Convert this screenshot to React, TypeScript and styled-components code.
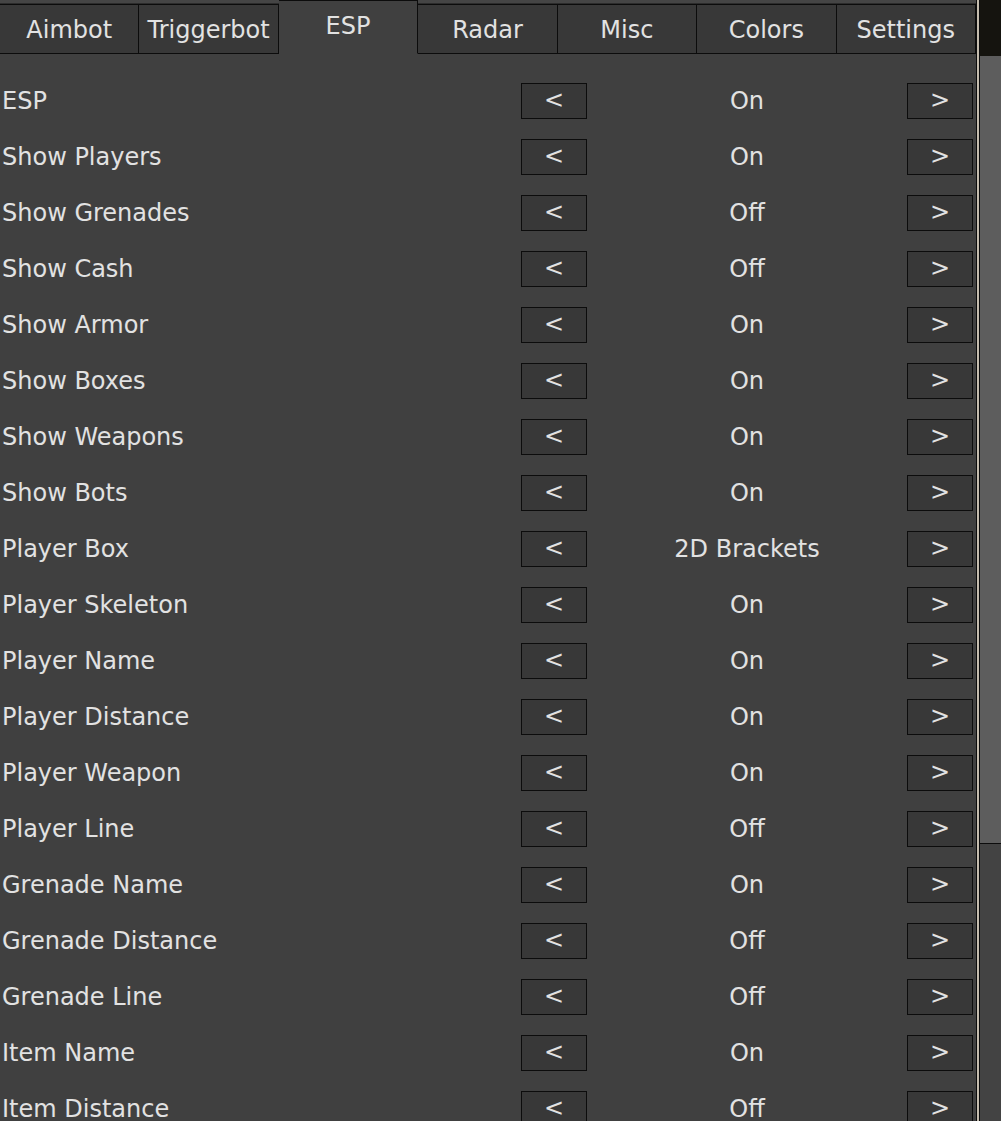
import styled, { createGlobalStyle } from 'styled-components';

const tabs = ['Aimbot', 'Triggerbot', 'ESP', 'Radar', 'Misc', 'Colors', 'Settings'];

const options: [string, string][] = [
  ['ESP', 'On'],
  ['Show Players', 'On'],
  ['Show Grenades', 'Off'],
  ['Show Cash', 'Off'],
  ['Show Armor', 'On'],
  ['Show Boxes', 'On'],
  ['Show Weapons', 'On'],
  ['Show Bots', 'On'],
  ['Player Box', '2D Brackets'],
  ['Player Skeleton', 'On'],
  ['Player Name', 'On'],
  ['Player Distance', 'On'],
  ['Player Weapon', 'On'],
  ['Player Line', 'Off'],
  ['Grenade Name', 'On'],
  ['Grenade Distance', 'Off'],
  ['Grenade Line', 'Off'],
  ['Item Name', 'On'],
  ['Item Distance', 'Off'],
];

function App() {
  const active = 'ESP';

  return (
    <>
      <GlobalStyle />
      <Page>
        <Main>
          <TabBar>
            {tabs.map(tab => (
              <Tab key={tab} $active={tab === active}>
                {tab}
              </Tab>
            ))}
          </TabBar>
          <Content>
            {options.map(([label, value]) => (
              <Row key={label}>
                <Label>{label}</Label>
                <StepButton>&lt;</StepButton>
                <Value>{value}</Value>
                <StepButton>&gt;</StepButton>
              </Row>
            ))}
          </Content>
        </Main>
        <Divider />
        <Scrollbar>
          <ScrollTop />
          <Thumb />
          <Track />
        </Scrollbar>
      </Page>
    </>
  );
}

export default App;

const GlobalStyle = createGlobalStyle`
  html, body {
    margin: 0;
    padding: 0;
    background: #404040;
  }
  * {
    box-sizing: border-box;
  }
`;

const Page = styled.div`
  display: flex;
  width: 1001px;
  height: 1121px;
  overflow: hidden;
  font-family: 'DejaVu Sans', Verdana, sans-serif;
  font-size: 24px;
  color: #e2e2e2;
`;

const Main = styled.div`
  width: 977px;
  display: flex;
  flex-direction: column;
  background: #404040;
  border-right: 1px solid #0c0c0c;
`;

const TabBar = styled.div`
  display: flex;
  align-items: flex-end;
  height: 55px;
  background: linear-gradient(to bottom, #454545 0px, #454545 3px, #2c2c2c 3px, #2c2c2c 5px, transparent 5px);
  position: relative;
  &::after {
    content: '';
    position: absolute;
    left: 0;
    right: 0;
    bottom: 0;
    height: 1px;
    background: #0c0c0c;
  }
`;

const Tab = styled.div<{ $active: boolean }>`
  flex: 1;
  height: ${p => (p.$active ? '54px' : '50px')};
  display: flex;
  align-items: center;
  justify-content: center;
  padding-top: ${p => (p.$active ? '0' : '2px')};
  padding-bottom: ${p => (p.$active ? '2px' : '0')};
  background: ${p => (p.$active ? '#404040' : '#383838')};
  border-top: 1px solid #0c0c0c;
  border-right: 1px solid #0c0c0c;
  border-bottom: 1px solid ${p => (p.$active ? '#404040' : '#0c0c0c')};
  position: relative;
  z-index: ${p => (p.$active ? 1 : 0)};
  &:first-child {
    border-left: none;
  }
`;

const Content = styled.div`
  padding-top: 19px;
  display: flex;
  flex-direction: column;
`;

const Row = styled.div`
  display: grid;
  grid-template-columns: 521px 66px 320px 66px;
  align-items: center;
  height: 56px;
`;

const Label = styled.div`
  padding-left: 2px;
  white-space: nowrap;
`;

const StepButton = styled.div`
  height: 36px;
  background: #383838;
  border: 1px solid #0c0c0c;
  display: flex;
  align-items: center;
  justify-content: center;
  padding-bottom: 2px;
`;

const Value = styled.div`
  text-align: center;
  white-space: nowrap;
`;

const Divider = styled.div`
  width: 3px;
  background: linear-gradient(to right, #c4bcae 0px, #c4bcae 2px, #0c0c0c 2px);
`;

const Scrollbar = styled.div`
  flex: 1;
  display: flex;
  flex-direction: column;
`;

const ScrollTop = styled.div`
  height: 56px;
  background: #15140f;
`;

const Thumb = styled.div`
  height: 787px;
  background: #5d5d5d;
`;

const Track = styled.div`
  flex: 1;
  background: #434343;
  border-top: 1px solid #0c0c0c;
`;
